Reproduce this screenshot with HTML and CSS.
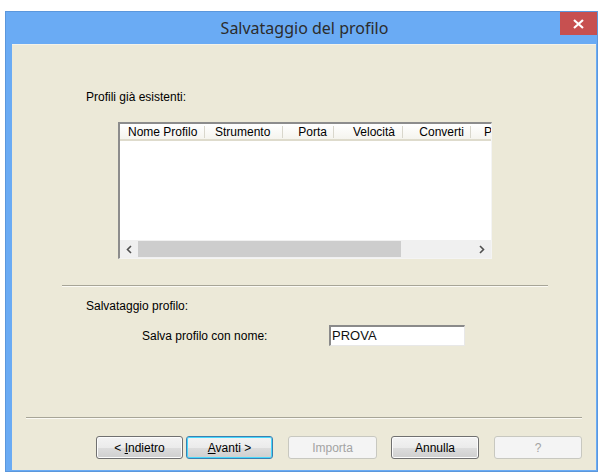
FILE: index.html
```html
<!DOCTYPE html>
<html lang="it">
<head>
<meta charset="utf-8">
<title>Salvataggio del profilo</title>
<link rel="stylesheet" href="styles.css">
</head>
<body>
<div class="window">
  <div class="titlebar">
    <span></span>
    <span class="title">Salvataggio del profilo</span>
    <button class="close" aria-label="Chiudi">
      <svg width="11" height="10" viewBox="0 0 11 10"><path d="M1 1 L10 9 M10 1 L1 9" stroke="#fff" stroke-width="2.2"/></svg>
    </button>
  </div>
  <div class="client">
    <div class="label existing">Profili già esistenti:</div>
    <div class="listview">
      <div class="lv-header">
        <div class="col c1">Nome Profilo</div>
        <div class="col c2">Strumento</div>
        <div class="col c3">Porta</div>
        <div class="col c4">Velocità</div>
        <div class="col c5">Converti</div>
        <div class="col c6">P</div>
      </div>
      <div class="lv-body"></div>
      <div class="hscroll">
        <div class="arrow">
          <svg width="6" height="9" viewBox="0 0 6 9"><path d="M5 1 L1.5 4.5 L5 8" fill="none" stroke="#505050" stroke-width="1.6"/></svg>
        </div>
        <div class="thumb"></div>
        <div class="track"></div>
        <div class="arrow">
          <svg width="6" height="9" viewBox="0 0 6 9"><path d="M1 1 L4.5 4.5 L1 8" fill="none" stroke="#505050" stroke-width="1.6"/></svg>
        </div>
      </div>
    </div>
    <div class="sep mid"></div>
    <div class="label section">Salvataggio profilo:</div>
    <div class="name-row">
      <span class="label name-label">Salva profilo con nome:</span>
      <div class="textbox">PROVA</div>
    </div>
    <div class="sep bottom"></div>
    <div class="buttons">
      <button class="btn">&lt; <u>I</u>ndietro</button>
      <button class="btn default"><u>A</u>vanti &gt;</button>
      <button class="btn disabled import">Importa</button>
      <button class="btn cancel">Annulla</button>
      <button class="btn disabled help">?</button>
    </div>
  </div>
</div>
</body>
</html>
```

FILE: styles.css
```css
* { box-sizing: border-box; }

html, body {
  margin: 0;
  padding: 0;
  background: #ffffff;
}

body {
  width: 598px;
  height: 473px;
  overflow: hidden;
  font-family: "Liberation Sans", Arial, sans-serif;
  font-size: 12px;
  color: #000;
}

.window {
  margin: 11px 0 0 5px;
  width: 593px;
  height: 461px;
  background: #6aabf4;
  border: 1px solid #5b97dc;
  display: flex;
  flex-direction: column;
}

.titlebar {
  height: 32px;
  display: grid;
  grid-template-columns: 1fr auto 1fr;
  align-items: start;
}

.title {
  font-family: "Noto Sans", "Open Sans", sans-serif;
  font-size: 16px;
  color: #2c2c2c;
  line-height: 20px;
  margin-top: 6px;
  padding-left: 6px;
}

.close {
  justify-self: end;
  width: 37px;
  height: 23px;
  border: 0;
  padding: 0;
  background: #c75050;
  display: flex;
  align-items: center;
  justify-content: center;
}

.client {
  flex: 1;
  margin: 0 1px 1px 6px;
  background: #ece9d8;
  border-top: 1px solid #f4f2e8;
  display: flex;
  flex-direction: column;
  padding-top: 45px;
}

.label {
  font-size: 12px;
  line-height: 14px;
  color: #000;
  white-space: nowrap;
}

.existing { margin-left: 74px; }

.listview {
  margin: 18px 0 0 106px;
  width: 374px;
  height: 137px;
  border-style: solid;
  border-width: 2px 1px 1px 2px;
  border-color: #8c8c8c #f4f4f4 #f4f4f4 #8c8c8c;
  box-shadow: inset 1px 1px 0 #6a6a6a;
  background: #fff;
  display: flex;
  flex-direction: column;
  overflow: hidden;
}

.lv-header {
  height: 17px;
  display: flex;
  background: linear-gradient(#ffffff, #f5f4ee);
  border-bottom: 2px solid #dedbcc;
  overflow: hidden;
  flex: none;
}

.col {
  flex: none;
  line-height: 15px;
  padding-top: 1px;
  white-space: nowrap;
  position: relative;
}

.col::after {
  content: "";
  position: absolute;
  right: 0;
  top: 2px;
  height: 12px;
  border-right: 1px solid #d9d7cc;
}

.c1 { width: 84px; padding-left: 7px; margin-left: 1px; }
.c2 { width: 78px; padding-left: 10px; }
.c3 { width: 51px; text-align: right; padding-right: 7px; }
.c4 { width: 69px; text-align: right; padding-right: 8px; }
.c5 { width: 68px; text-align: right; padding-right: 7px; }
.c6 { width: 40px; padding-left: 13px; }
.c6::after { display: none; }

.lv-body { flex: 1; background: #fff; }

.hscroll {
  height: 18px;
  display: flex;
  background: #f0f0f0;
  flex: none;
}

.arrow {
  width: 18px;
  display: flex;
  align-items: center;
  justify-content: center;
  flex: none;
}

.thumb {
  width: 263px;
  margin: 1px 0;
  background: #cdcdcd;
  flex: none;
}

.track { flex: 1; }

.sep {
  height: 2px;
  border-top: 1px solid #a7a597;
  border-bottom: 1px solid #fbfaf4;
  flex: none;
}

.sep.mid {
  margin: 26px 0 0 50px;
  width: 486px;
}

.section {
  margin: 12px 0 0 74px;
}

.name-row {
  margin: 12px 0 0 130px;
  display: flex;
  align-items: center;
}

.name-label { width: 187px; }

.textbox {
  width: 136px;
  height: 21px;
  background: #fff;
  border-style: solid;
  border-width: 2px 1px 1px 2px;
  border-color: #8a8a8a #e8e8e8 #e8e8e8 #8a8a8a;
  font-size: 13px;
  line-height: 17px;
  padding-left: 1px;
  color: #111;
}

.sep.bottom {
  margin: auto 0 0 14px;
  width: 556px;
}

.buttons {
  display: flex;
  margin: 17px 0 11px 84px;
}

.btn {
  width: 87px;
  height: 23px;
  padding: 0;
  font-family: "Liberation Sans", Arial, sans-serif;
  font-size: 12px;
  color: #000;
  border: 1px solid #707070;
  border-radius: 3px;
  background: linear-gradient(#f3f3f3 0%, #ebebeb 50%, #dddddd 51%, #cfcfcf 100%);
  box-shadow: inset 0 0 0 1px #fcfcfc;
}

.btn.default {
  margin-left: 3px;
  border-color: #3c7fb1;
  box-shadow: inset 0 0 0 1px #48d8fb;
}

.btn.import { margin-left: 15px; width: 89px; }
.btn.cancel { margin-left: 14px; width: 88px; }
.btn.help { margin-left: 15px; width: 88px; }

.btn.disabled {
  color: #a3a3a3;
  border-color: #c8c8c0;
  background: #f4f4f4;
  box-shadow: none;
}
```
